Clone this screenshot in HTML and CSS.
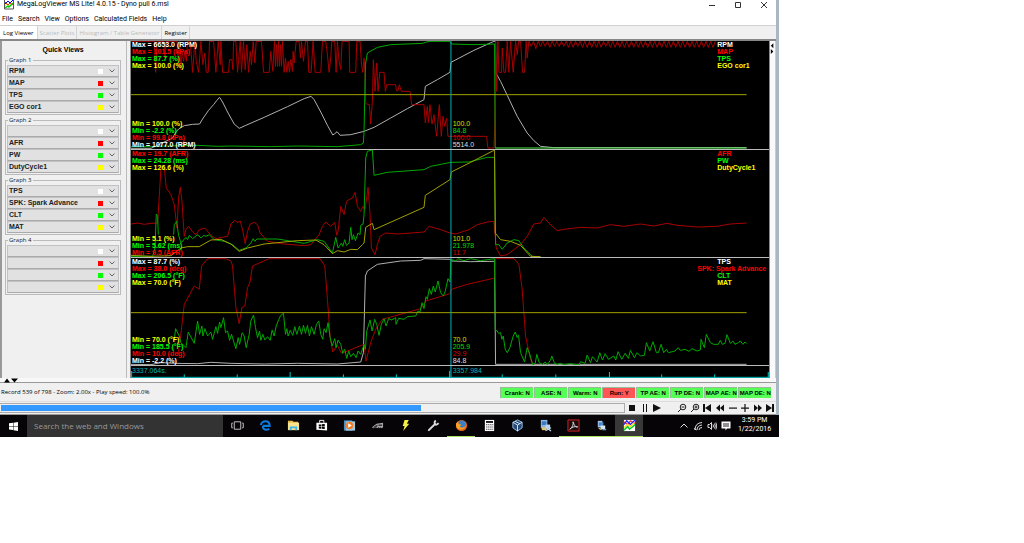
FILE: index.html
```html
<!DOCTYPE html>
<html lang="en">
<head>
<meta charset="utf-8">
<title>MegaLogViewer MS Lite! 4.0.15 - Dyno pull 6.msl</title>
<link rel="stylesheet" href="styles.css">
</head>
<body>
<div class="desktop">
<main class="window">
  <header class="titlebar">
    <svg class="logo" viewBox="0 0 10 10"><path fill="#fff" stroke="#555" d="M.5-1h9v10h-9z"/><path fill="none" stroke="#00f" d="M1 4l3-3 2 2 3-3"/><path fill="none" stroke="#e22" d="M1 2l3 3 2-2 3 2"/><path fill="none" stroke="#0c0" stroke-width="1.5" d="M1 8l3-2 1 1 4-4"/><path stroke="#fd0" d="M1 6l2-2"/></svg>
    <h1>MegaLogViewer MS Lite! 4.0.15 - Dyno pull 6.msl</h1>
    <div class="winbtns">
      <button aria-label="Minimize"><svg viewBox="0 0 8 8"><path d="M1 4.500h6"/></svg></button>
      <button aria-label="Maximize"><svg viewBox="0 0 8 8"><path d="M1.500 1.500h5v5h-5z"/></svg></button>
      <button aria-label="Close"><svg viewBox="0 0 8 8"><path d="M1 1l6 6M7 1L1 7"/></svg></button>
    </div>
  </header>
  <nav class="menubar">
    <button>File</button><button>Search</button><button>View</button><button>Options</button><button>Calculated Fields</button><button>Help</button>
  </nav>
  <div class="tabs">
    <button class="tab active">Log Viewer</button><button class="tab" disabled>Scatter Plots</button><button class="tab" disabled>Histogram / Table Generator</button><button class="tab">Register</button>
  </div>
  <div class="content">
    <aside class="views">
      <h2>Quick Views</h2>
      <fieldset><legend>Graph 1</legend>
        <div class="pick"><select aria-label="Graph 1 white"><option>RPM</option></select><i class="sw white"></i><svg class="chev" viewBox="0 0 6 4"><path d="M.5.5L3 3 5.500.5"/></svg></div>
        <div class="pick"><select aria-label="Graph 1 red"><option>MAP</option></select><i class="sw red"></i><svg class="chev" viewBox="0 0 6 4"><path d="M.5.5L3 3 5.500.5"/></svg></div>
        <div class="pick"><select aria-label="Graph 1 green"><option>TPS</option></select><i class="sw green"></i><svg class="chev" viewBox="0 0 6 4"><path d="M.5.5L3 3 5.500.5"/></svg></div>
        <div class="pick"><select aria-label="Graph 1 yellow"><option>EGO cor1</option></select><i class="sw yellow"></i><svg class="chev" viewBox="0 0 6 4"><path d="M.5.5L3 3 5.500.5"/></svg></div>
      </fieldset>
      <fieldset><legend>Graph 2</legend>
        <div class="pick"><select aria-label="Graph 2 white"><option></option></select><i class="sw white"></i><svg class="chev" viewBox="0 0 6 4"><path d="M.5.5L3 3 5.500.5"/></svg></div>
        <div class="pick"><select aria-label="Graph 2 red"><option>AFR</option></select><i class="sw red"></i><svg class="chev" viewBox="0 0 6 4"><path d="M.5.5L3 3 5.500.5"/></svg></div>
        <div class="pick"><select aria-label="Graph 2 green"><option>PW</option></select><i class="sw green"></i><svg class="chev" viewBox="0 0 6 4"><path d="M.5.5L3 3 5.500.5"/></svg></div>
        <div class="pick"><select aria-label="Graph 2 yellow"><option>DutyCycle1</option></select><i class="sw yellow"></i><svg class="chev" viewBox="0 0 6 4"><path d="M.5.5L3 3 5.500.5"/></svg></div>
      </fieldset>
      <fieldset><legend>Graph 3</legend>
        <div class="pick"><select aria-label="Graph 3 white"><option>TPS</option></select><i class="sw white"></i><svg class="chev" viewBox="0 0 6 4"><path d="M.5.5L3 3 5.500.5"/></svg></div>
        <div class="pick"><select aria-label="Graph 3 red"><option>SPK: Spark Advance</option></select><i class="sw red"></i><svg class="chev" viewBox="0 0 6 4"><path d="M.5.5L3 3 5.500.5"/></svg></div>
        <div class="pick"><select aria-label="Graph 3 green"><option>CLT</option></select><i class="sw green"></i><svg class="chev" viewBox="0 0 6 4"><path d="M.5.5L3 3 5.500.5"/></svg></div>
        <div class="pick"><select aria-label="Graph 3 yellow"><option>MAT</option></select><i class="sw yellow"></i><svg class="chev" viewBox="0 0 6 4"><path d="M.5.5L3 3 5.500.5"/></svg></div>
      </fieldset>
      <fieldset><legend>Graph 4</legend>
        <div class="pick"><select aria-label="Graph 4 white"><option></option></select><i class="sw white"></i><svg class="chev" viewBox="0 0 6 4"><path d="M.5.5L3 3 5.500.5"/></svg></div>
        <div class="pick"><select aria-label="Graph 4 red"><option></option></select><i class="sw red"></i><svg class="chev" viewBox="0 0 6 4"><path d="M.5.5L3 3 5.500.5"/></svg></div>
        <div class="pick"><select aria-label="Graph 4 green"><option></option></select><i class="sw green"></i><svg class="chev" viewBox="0 0 6 4"><path d="M.5.5L3 3 5.500.5"/></svg></div>
        <div class="pick"><select aria-label="Graph 4 yellow"><option></option></select><i class="sw yellow"></i><svg class="chev" viewBox="0 0 6 4"><path d="M.5.5L3 3 5.500.5"/></svg></div>
      </fieldset>
    </aside>
    <section class="plots">
      <div class="graph first">
        <svg viewBox="0 9 1917 324" preserveAspectRatio="none">
          <path class="w" d="M0 331H60L125 300 135 282 143 273 160 263 185 259 206 258 215 243 233 217 248 200 258 187 266 178 275 192 290 222 310 258 325 271 345 262 400 238 470 206 520 182 541 175 550 185 570 222 590 262 606 291 612 287 619 281 628 292 660 290 700 280 730 268 780 240 830 212 880 185 884 145 920 125 958 103 961 73 1030 37 1090 10 1095 10 1096 105 1110 130 1130 172 1160 235 1190 285 1210 308 1230 325 1270 329H1849"/>
          <path class="r" d="M0 10H70L74 103 78 10H98L102 60 106 10H138L142 80 146 10 150 95 154 40 158 70 162 40 166 70 170 10 178 10 185 103 192 10 196 70 203 103 210 10 216 80 222 45 226 103H232L236 10H248L255 103 262 10 268 80 270 10 275 103H293L296 65H303L306 95 308 10H315L320 103 328 10 332 103 338 10 343 95 348 20 353 103 358 40 362 80 367 10 372 75 376 10H392L398 103H415L420 40 426 100 431 10 434 85 437 20 440 85 443 10 446 85 449 20 452 85 455 10 460 103 464 60 468 103 472 70 476 103 480 65 485 100 487 40 490 75 496 10H505L509 60 512 10 518 70 524 10H530L534 103H541L547 10 553 103H570L575 10H585L590 50 595 103 600 60 603 10H612L616 103 620 10 625 70 630 95 634 10H655L657 103H675L678 10H688L692 75 696 103 700 60 703 103 705 197 716 200 720 258 725 190 728 65 733 160 738 75 742 160 747 103H760L764 160 768 140H795L797 158H802L806 140 812 160H838L843 200H880L884 255 890 205 893 255 898 200 904 258 910 230 918 295 926 200 932 295 937 235 942 265 948 240 952 295H1068L1072 330H1090L1093 255 1095 10 1098 160 1102 10 1105 103H1113L1115 30 1120 103H1125L1130 10 1135 103 1140 10 1148 103 1155 10 1160 50 1164 10H1170L1176 103H1182L1187 10 1190 60 1195 10l7 15 7-15 7 22 7-22 7 15 7-15 7 15 7-15 7 18 7-18 7 15 7-15 7 15 7-15 7 15 7-15 7 18 7-18 7 18 7-18 7 15 7-15 7 18 7-18 7 18 7-18 7 18 7-18 7 18 7-18 7 18 7-18 7 15 7-15 7 18 7-18 7 18 7-18 7 18 7-18 7 18 7-18 7 18 7-18 7 18 7-18 7 18 7-18 7 18 7-18 7 18 7-18 7 18 7-18 7 18 7-18 7 18 7-18 7 18 7-18 7 18 7-18 7 18 7-18 7 18 7-18 7 18 7-18 7 18 7-18 7 18 7-18 7 18 7-18 7 18 7-18 7 18 7-18 7 18 7-18"/>
          <path class="g" d="M0 326H70L100 324 200 322 260 325 300 324 420 326 500 324 620 326 690 320 698 315 700 280 704 80 710 45 740 28 780 20 875 16 895 10H958L963 18 1030 20 1092 18 1094 330"/>
          <path class="g bright" d="M1094 330H1849"/>
          <path class="y" d="M0 170H1849"/>
          <path class="cursor" d="M961 0V340"/>
        </svg>
        <ul class="max"><li class="cw">Max = 6653.0 (RPM)</li><li class="cr">Max = 101.5 (kPa)</li><li class="cg">Max = 87.7 (%)</li><li class="cy">Max = 100.0 (%)</li></ul>
        <ul class="min"><li class="cy">Min = 100.0 (%)</li><li class="cg">Min = -2.2 (%)</li><li class="cr">Min = 99.8 (kPa)</li><li class="cw">Min = 1077.0 (RPM)</li></ul>
        <ul class="now"><li class="cy">100.0</li><li class="cg">84.8</li><li class="cr">100.0</li><li class="cw">5514.0</li></ul>
        <ul class="names"><li class="cw">RPM</li><li class="cr">MAP</li><li class="cg">TPS</li><li class="cy">EGO cor1</li></ul>
      </div>
      <div class="graph">
        <svg viewBox="0 6 1917 321" preserveAspectRatio="none">
          <path class="r" d="M0 228L20 225 40 229 60 226 80 225 90 60H100L106 120 120 140 130 170 138 240 143 150 148 118 153 160 160 265 165 245 173 235 185 252 195 260 205 245 222 240 240 262 255 272 275 268 290 265 300 228 312 217 320 224 328 219 335 245 343 287 350 250 358 228 370 223 380 230 388 255 410 280 450 287 520 293 540 290 565 260 575 235 585 222 600 235 612 223 618 262 622 250 630 175 640 200 647 160 655 155 665 150 673 133 680 175 690 190 697 175 703 185 712 118 718 200 722 300 733 320 740 290 748 265 765 255 800 258 880 252 895 235 930 245 958 255 975 258 1015 245 1040 230 1070 222 1090 220 1097 300 1110 324 1130 320 1150 305 1170 290 1190 265 1210 228 1230 225 1240 208 1255 225 1280 248 1300 244 1350 238 1400 240 1440 230 1480 235 1530 228 1570 234 1610 226 1640 232 1700 237 1760 235 1800 228 1849 225"/>
          <path class="g" d="M0 325H65L72 300 76 198 80 205 82 260M128 260L130 230 137 220 143 262 150 285 165 268 170 275 175 262 185 272 200 260 210 270 218 262 225 265 235 260 250 275 280 280 305 290 325 307 345 300 360 285 367 272 372 280 378 273H440L520 286 560 275 580 280 605 315 615 268 622 300 632 285 636 295 642 275 647 292 655 285 660 238 664 275 668 260 674 278 682 255 688 260 690 232 697 228 700 200 705 30 710 10 725 6 730 82 770 73 880 65 900 55 961 43 1015 42 1070 28H1092L1095 290H1105L1115 304 1130 285 1150 275 1165 278 1180 300 1205 325 1230 327"/>
          <path class="y" d="M0 322L60 325 120 323 150 300 170 296 205 296 240 276 270 274 300 288 325 310 350 300 400 288 500 278 555 276 580 290 605 317 620 308 640 312 660 304 680 305 695 290 700 285 705 238 725 226 730 245 880 178 884 142 958 95 962 72 1030 38 1090 7 1092 7 1094 255 1110 275 1140 280 1170 292 1200 325 1230 326"/>
          <path class="cursor" d="M961 0V340"/>
        </svg>
        <ul class="max"><li class="cr">Max = 19.7 (AFR)</li><li class="cg">Max = 24.28 (ms)</li><li class="cy">Max = 126.6 (%)</li></ul>
        <ul class="min"><li class="cy">Min = 5.1 (%)</li><li class="cg">Min = 5.62 (ms)</li><li class="cr">Min = 9.5 (AFR)</li></ul>
        <ul class="now"><li class="cy">101.0</li><li class="cg">21.978</li><li class="cr">11.7</li></ul>
        <ul class="names"><li class="cr">AFR</li><li class="cg">PW</li><li class="cy">DutyCycle1</li></ul>
      </div>
      <div class="graph">
        <svg viewBox="0 6 1917 321" preserveAspectRatio="none">
          <path class="w" d="M0 325L60 326 90 320 135 322 200 323 240 319 300 322 400 324 500 322 620 324 690 318 698 290 704 60 710 45 740 25 810 15 870 13 880 8 960 10 962 15 1020 17 1092 16 1095 325H1849"/>
          <path class="r" d="M140 300L148 250 160 145 190 90 205 100 212 30 230 8H285L300 15 305 30 315 155 325 203 333 155 342 150 350 95 357 80 365 30 415 8H568L582 30 590 130 598 240 606 288 620 268 632 292 700 265 706 315 720 260 735 220 755 190 780 183 870 158 885 135 958 113 962 100 1010 85 1092 66 1094 8H1150L1165 25 1175 100 1185 240 1200 310 1210 326"/>
          <path class="g" d="M130 250L134 218 145 240 150 260 165 275 172 228 190 262 200 195 206 235 213 210 216 240 222 218 230 240 240 228 245 250 255 212 260 232 266 198 270 215 278 185 284 230 290 225 296 253 302 235 315 278 322 245 326 265 334 230 340 240 346 275 355 235 360 195 368 177 374 215 380 245 386 225 390 253 396 235 402 252 410 242 418 253 424 222 430 240 436 210 444 190 450 178 458 172 464 235 468 218 472 240 478 223 486 238 492 212 498 235 506 210 512 235 518 208 524 232 530 208 536 240 542 212 550 235 557 205 564 195 570 235 576 250 580 218 586 230 592 200 598 245 604 270 612 248 616 275 622 252 630 265 636 292 642 280 648 307 654 285 660 302 668 292 676 305 682 285 690 295 700 265 704 280 708 225 718 192 724 225 732 190 738 205 745 238 752 205 760 188 766 210 774 187 782 192 795 185 796 205 804 187 820 190 830 182 855 180 862 165 868 168 874 140 880 158 886 122 890 130 896 98 902 115 908 90 914 108 922 75 930 110 938 120 944 105 952 68 958 78 961 10 975 15 982 8 1000 14 1020 8 1050 14 1092 8 1094 222 1100 225 1104 232 1110 230 1114 250 1118 240 1124 280 1130 290 1138 275 1148 240 1154 228 1160 245 1164 238 1170 290 1182 318 1190 275 1198 295 1206 325 1214 322 1219 295 1226 320 1236 325 1244 318 1250 326 1260 312 1264 300 1272 322 1280 325 1290 322 1300 326 1320 323 1346 327 1350 317 1364 322 1370 297 1380 320 1386 302 1400 318 1408 290 1416 312 1424 293 1434 310 1450 300 1456 312 1463 287 1474 310 1484 292 1494 307 1500 283 1512 305 1520 290 1530 300 1542 298 1548 260 1558 285 1568 257 1578 290 1584 290 1592 265 1600 290 1608 280 1614 290 1634 285 1643 275 1650 283 1664 280 1676 286 1685 278 1700 285 1710 282 1712 250 1722 275 1728 235 1740 260 1750 265 1764 265 1770 253 1776 265 1784 262 1790 236 1800 262 1808 255 1814 265 1824 260 1830 255 1838 265 1844 258 1849 262"/>
          <path class="y" d="M0 170H1849"/>
          <path class="cursor" d="M961 0V340"/>
        </svg>
        <ul class="max"><li class="cw">Max = 87.7 (%)</li><li class="cr">Max = 38.0 (deg)</li><li class="cg">Max = 206.5 (°F)</li><li class="cy">Max = 70.0 (°F)</li></ul>
        <ul class="min"><li class="cy">Min = 70.0 (°F)</li><li class="cg">Min = 185.5 (°F)</li><li class="cr">Min = 10.0 (deg)</li><li class="cw">Min = -2.2 (%)</li></ul>
        <ul class="now"><li class="cy">70.0</li><li class="cg">205.9</li><li class="cr">29.9</li><li class="cw">84.8</li></ul>
        <ul class="names"><li class="cw">TPS</li><li class="cr">SPK: Spark Advance</li><li class="cg">CLT</li><li class="cy">MAT</li></ul>
      </div>
      <div class="axis">
        <svg viewBox="0 0 1917 36" preserveAspectRatio="none"><path class="tick" d="M0 34H1917M2 15V34M160 25V34M319 25V34M478 18V34M638 25V34M797 25V34M957 14V34M961 0V34M1115 25V34M1276 25V34M1437 18V34M1594 25V34M1753 25V34M1914 18V34"/></svg>
        <span>3337.064s.</span><span>3357.984</span>
      </div>
    </section>
    <div class="strip"><svg viewBox="0 0 6 14"><path d="M4 0v6L1 3zM1 7v6l3-3z"/></svg></div>
  </div>
  <div class="divider"><svg viewBox="0 0 16 5"><path d="M1 4.500h6L4 .5zM8 .5h7L11.500 4.500z"/></svg></div>
  <div class="status">
    <p>Record 539 of 798 - Zoom: 2.00x - Play speed: 100.0%</p>
    <ul class="flags"><li>Crank: N</li><li>ASE: N</li><li>Warm: N</li><li class="on">Run: Y</li><li>TP AE: N</li><li>TP DE: N</li><li>MAP AE: N</li><li>MAP DE: N</li></ul>
  </div>
  <div class="player">
    <div class="track" role="progressbar" aria-label="Position" aria-valuenow="539" aria-valuemax="798"><div class="fill" style="width:67.5%"></div></div>
    <div class="keys transport">
      <button aria-label="Stop"><svg viewBox="0 0 10 10"><path d="M2 2h6v6H2z"/></svg></button>
      <button aria-label="Pause"><svg viewBox="0 0 10 10"><path d="M3 1h1v8H3zM6 1h1v8H6z"/></svg></button>
      <button aria-label="Play"><svg viewBox="0 0 10 10"><path d="M1 1l8 4-8 4z"/></svg></button>
    </div>
    <div class="keys seek">
      <button aria-label="Zoom out"><svg viewBox="0 0 10 10"><path class="line" d="M4 6L1 9M4.500 4h3"/><circle class="line" cx="6" cy="4" r="2.800"/></svg></button>
      <button aria-label="Zoom in"><svg viewBox="0 0 10 10"><path class="line" d="M4 6L1 9M4.500 4h3M6 2.500v3"/><circle class="line" cx="6" cy="4" r="2.800"/></svg></button>
      <button aria-label="First"><svg viewBox="0 0 10 10"><path d="M1 1h2v8H1zM9 1v8L3 5z"/></svg></button>
      <button aria-label="Rewind"><svg viewBox="0 0 10 10"><path d="M5 1.500v7L1 5zM9 1.500v7L5 5z"/></svg></button>
      <button aria-label="Slower"><svg viewBox="0 0 10 10"><path d="M1 4.500h8v1.200H1z"/></svg></button>
      <button aria-label="Faster"><svg viewBox="0 0 10 10"><path d="M1 4.500h8v1.200H1zM4.400 1h1.200v8H4.400z"/></svg></button>
      <button aria-label="Forward"><svg viewBox="0 0 10 10"><path d="M1 1.500v7L5 5zM5 1.500v7L9 5z"/></svg></button>
      <button aria-label="Last"><svg viewBox="0 0 10 10"><path d="M9 1H7v8h2zM1 1v8l6-4z"/></svg></button>
    </div>
  </div>
</main>
<footer class="taskbar">
  <button class="start" aria-label="Start"><svg viewBox="0 0 10 10"><path fill="#fff" d="M0 1.500L4.500.9v3.800H0zM5 .8L10 0v4.700H5zM0 5.200h4.500V9L0 8.400zM5 5.200h5V10l-5-.8z"/></svg></button>
  <input class="search" type="text" placeholder="Search the web and Windows" aria-label="Search the web and Windows">
  <div class="apps">
    <button aria-label="Task view"><svg viewBox="0 0 14 14"><path fill="none" stroke="#ccc" d="M3.500 3h7v8h-7zM2 4.500H.8v5H2M12 4.500h1.200v5H12"/></svg></button>
    <button aria-label="Edge"><svg viewBox="0 0 14 14"><path fill="none" stroke="#0a7be0" stroke-width="2.200" d="M4 7.400h7.500C11.500 4 9.500 2.500 7 2.500 4.500 2.500 2.300 4.300 2 6.500M4.200 7.500C4 10 5.500 11.500 8 11.500q1.700 0 3-.8"/></svg></button>
    <button aria-label="File Explorer"><svg viewBox="0 0 14 14"><path fill="#e8bd4c" d="M1 2h5l1 1h5v2H1z"/><path fill="#fbe28c" d="M1 4h12v8H1z"/><path fill="#3eb4e8" d="M3 12V8h8v4H9v-2H5v2z"/></svg></button>
    <button aria-label="Store"><svg viewBox="0 0 14 14"><path fill="none" stroke="#fff" d="M5 4V1.500h4.500V4"/><path fill="#fff" d="M1.500 4h11.500v8.500L1.500 11.500z"/><path fill="#000" d="M4 6l2.600-.2v2H4zM7.200 5.700L10.500 5.500v2.300H7.200zM4 8.400h2.600v2L4 10.200zM7.200 8.400h3.300v2.400l-3.300-.3z"/></svg></button>
    <button aria-label="Media player"><svg viewBox="0 0 14 14"><path fill="#4a8fc0" d="M1 1.500h9v11H1z"/><path fill="#9bc8e4" d="M3 2.500h10v10H3z"/><circle cx="7" cy="7" r="4" fill="#f47b20"/><path fill="#fff" d="M5.500 4.500v5l4-2.500z"/></svg></button>
    <button aria-label="Tuner"><svg viewBox="0 0 14 14"><path fill="#aaa" d="M1 9l5-4 7-1v5l-1.500 1-1-1-1 1-1-1-2 1-1-1-3 1z"/><path fill="#333" d="M2 9l5-3v2l-3 1.500zM8 6h4v1.500H8z"/></svg></button>
    <button aria-label="Spark"><svg viewBox="0 0 14 14"><path fill="#f4f04a" d="M6 1h4.500L8.500 5H11l-6.500 8L6 7.500H4z"/></svg></button>
    <button aria-label="Wrench"><svg viewBox="0 0 14 14"><path fill="none" stroke="#ddd" stroke-width="2.200" stroke-linecap="round" d="M2 12l6.500-6.500"/><path fill="none" stroke="#ddd" stroke-width="2" d="M9.500 1.500Q7.500 3 8.500 5.200t4-.7"/></svg></button>
    <button class="run" aria-label="Firefox"><svg viewBox="0 0 14 14"><circle cx="7" cy="7" r="6" fill="#e8651b"/><circle cx="7.500" cy="5.500" r="3.800" fill="#3c7fc4"/><path fill="#f9a326" d="M1 5l2-2 1 2.500 3 .8-2 1.700c1.500 2 4 2 6.500-.5C10 12 4 12.500 1.500 9z"/></svg></button>
    <button aria-label="Calculator"><svg viewBox="0 0 14 14"><path fill="#fff" d="M2 1h10v12H2z"/><path fill="#111" d="M3.200 2.200h7.600v2H3.200z"/><path stroke="#111" stroke-width="1.200" stroke-dasharray="1.200 1" d="M3.500 6.200h7.500M3.500 8.600h7.500M3.500 11h7.500"/></svg></button>
    <button aria-label="VirtualBox"><svg viewBox="0 0 14 14"><path fill="#274a78" stroke="#9ec3e8" d="M7 1l5 2.500v6L7 13 2 9.500v-6z"/><path fill="none" stroke="#dcecfa" d="M2 3.500L7 6.500l5-3M7 6.500V13M4.500 2.500L9.500 5"/></svg></button>
    <button aria-label="Remote tools"><svg viewBox="0 0 14 14"><path fill="#8db9e8" d="M2 1h7v9H2z"/><path fill="#3b78bd" d="M3 2.500h5v4H3z"/><path fill="#e0c36a" d="M3 9h5v3H3z"/><path fill="#b9d5ee" d="M7 6h5v4H7z"/><path stroke="#c9dcf0" stroke-width="1.300" d="M7 12.500l6-3M8 9.500l5 3.500"/></svg></button>
    <button class="run" aria-label="Acrobat"><svg viewBox="0 0 14 14"><path fill="#1d0c0e" stroke="#d22" d="M1 1h12v12H1z"/><path fill="none" stroke="#ddd" d="M3 11c3-2 4-5 3.500-8C8 7 9 9 11.500 8.500 8 7.500 5 9 3 11"/></svg></button>
    <button class="run" aria-label="Log tool"><svg viewBox="0 0 14 14"><path fill="#a9c8ea" d="M3 2h5v7H3z"/><path fill="#4d8bd0" d="M4 3.500h5v4H4z"/><path fill="#d6e5f3" d="M6 7h5v4H6z"/><path stroke="#e3c66b" stroke-width="1.200" d="M4 10l3 1.500"/><path stroke="#6aa1dc" stroke-width="1.300" d="M8 11.500h4"/></svg></button>
    <button class="run current" aria-label="MegaLogViewer"><svg viewBox="0 0 14 14"><path fill="#fff" d="M1 1h12v12H1z"/><path fill="none" stroke="#e33" stroke-width="1.400" d="M1 3l4 3 3-4 5 3"/><path fill="none" stroke="#22f" stroke-width="1.400" d="M1 6l3-4 4 4 5-5"/><path fill="none" stroke="#0c2" stroke-width="1.600" d="M1 12l4-4 2 3 6-5"/><path fill="none" stroke="#fd2" stroke-width="1.400" d="M1 9l4-3 3 2 4-4"/></svg></button>
  </div>
  <div class="tray">
    <svg viewBox="0 0 10 10"><path d="M1.500 6.500L5 3l3.500 3.500"/></svg>
    <svg viewBox="0 0 10 10"><path d="M2 9Q2 2 9 1.500M4 9q0-4.500 5-5M6 9q0-2.500 3-2.500M1 7.500L3.500 9"/></svg>
    <svg viewBox="0 0 10 10"><path d="M1 3.500h1.500L4.500 1.500v7L2.500 6.500H1zM6 3.500q1 1.500 0 3M7.500 2.500q1.500 2.500 0 5M8.800 1.500q2 3.500 0 7"/></svg>
    <svg class="note" viewBox="0 0 10 10"><path d="M.5.5h9v7H6L4.500 9.500v-2h-4z"/><path class="cut" d="M2 3h6M2 5h6"/></svg>
  </div>
  <time><span>3:59 PM</span><span>1/22/2016</span></time>
</footer>
</div>
</body>
</html>
```
FILE: styles.css
```css
* { box-sizing: border-box; margin: 0; padding: 0; }
body { background: #fff; font: 6px/8px "Open Sans", "Noto Sans", sans-serif; color: #000; }
button, input, select { font: inherit; color: inherit; border: 0; background: none; border-radius: 0; }
ul { list-style: none; }
svg { display: block; }
.desktop { width: 76.1%; }
.window { background: #f0f0f0; border-right: 3px solid #a9b7c4; }

.titlebar { display: flex; align-items: center; height: 11px; padding: 0 8px 2px 4px; gap: 3px; background: #fff; }
.logo { width: 10px; height: 10px; }
.titlebar h1 { flex: 1; font: 400 7px/9px Roboto, "Open Sans", sans-serif; }
.winbtns { display: flex; gap: 18px; }
.winbtns svg { width: 8px; height: 8px; fill: none; stroke: #333; }

.menubar { display: flex; gap: 5px; height: 14px; padding: 1px 2px 0; background: #fff; font: 7px/8px Roboto, "Open Sans", sans-serif; }
.tabs { display: flex; height: 14px; border-top: 1px solid #d0d0d0; }
.tab { padding: 0 2px; border-right: 1px solid #d5d5d5; }
.tab.active { background: #fff; padding: 0 3px; }
.tab:disabled { color: #bbb; }

.content { display: grid; grid-template-columns: 130px 1fr 7px; border-top: 2px solid #888; }
.views { border-left: 2px solid #999; padding: 4px 9px 0 3px; background: #f0f0f0; box-shadow: inset -3px 0 0 #f0f0f0, inset -4px 0 0 #bbb; }
.views h2 { font: bold 7px/10px "Liberation Sans", Arial, sans-serif; text-align: center; margin-bottom: 1px; }
fieldset { border: 1px solid #bbb; padding: 1px; margin-bottom: 1px; min-width: 0; }
legend { margin-left: 1px; padding: 0 1px; line-height: 8px; color: #222; }
.pick { display: grid; grid-template-columns: 1fr 5px 6px; column-gap: 6px; align-items: center; height: 12px; padding-right: 3px; border: 1px solid #c2c2c6; border-bottom-color: #aaa; background: #e1e1e1; }
.pick select { grid-area: 1 / 1 / 2 / 4; appearance: none; height: 10px; padding-left: 1px; font: bold 7px/10px "Liberation Sans", Arial, sans-serif; width: 100%; color: #222; }
.sw { grid-area: 1 / 2; height: 5px; pointer-events: none; }
.chev { grid-area: 1 / 3; width: 6px; height: 4px; fill: none; stroke: #666; pointer-events: none; }
.white { background: #fff; }
.red { background: #f00; }
.green { background: #0f0; }
.yellow { background: #ff0; }

.plots { background: #000; min-width: 0; border-left: 1px solid #888; font: bold 7px/7px "Liberation Sans", Arial, sans-serif; }
.graph { position: relative; border-bottom: 1px solid #bbb; }
.graph svg { width: 100%; height: 107px; }
.graph.first svg { height: 108px; }
.graph path { fill: none; stroke-width: 1px; vector-effect: non-scaling-stroke; }
.graph .w { stroke: #b0b0b0; }
.graph .r { stroke: #a80000; }
.graph .g { stroke: #00a800; }
.graph .bright { stroke: #4e4; }
.graph .y { stroke: #a0a000; }
.graph .cursor { stroke: #00b4b4; }
.graph ul { position: absolute; }
.max { top: 0; left: 1px; }
.min { bottom: 1px; left: 1px; }
.now { bottom: 1px; left: 50.4%; font-weight: 400; opacity: .85; }
.names { top: 0; right: 3px; display: grid; justify-items: end; }
.names li { min-width: 49px; }
.cw { color: #fff; }
.cr { color: #f00; }
.cg { color: #0f0; }
.cy { color: #ff0; }
.axis { display: grid; grid-template-columns: 50.4% 1fr; height: 12px; font-weight: 400; color: #00b4b4; }
.axis svg { grid-area: 1 / 1 / 2 / 3; width: 100%; height: 12px; }
.axis span { grid-row: 1; line-height: 10px; }
.axis span:first-of-type { grid-column: 1; padding-left: 1px; }
.axis span:last-of-type { grid-column: 2; }
.tick { fill: none; stroke: #00c8c8; stroke-width: 1px; vector-effect: non-scaling-stroke; }
.strip { border-left: 1px solid #888; border-right: 1px solid #ccc; background: #fafafa; }
.strip svg { width: 5px; height: 14px; margin-top: 1px; }

.divider { height: 5px; padding-left: 3px; border-bottom: 1px solid #999; background: #f8f8f8; }
.divider svg { width: 16px; height: 5px; }
.status { display: flex; justify-content: space-between; align-items: center; height: 18px; padding: 0 5px 0 1px; }
.flags { display: flex; gap: 1px; }
.flags li { width: 33px; height: 11px; border: 1px solid #9b9; border-width: 1px 0 0 1px; background: #5f5; text-align: center; white-space: nowrap; font: bold 6px/10px "Liberation Sans", Arial, sans-serif; }
.flags .on { background: #f55; }

.player { display: flex; align-items: center; height: 14px; padding-right: 1px; border-top: 1px solid #ddd; border-bottom: 1px solid #999; }
.track { flex: 1; height: 10px; padding: 1px; border: 1px solid #aaa; border-left: 0; background: #f0f0f0; }
.fill { height: 6px; background: #39f; }
.keys { display: flex; justify-content: space-between; }
.transport { width: 35px; margin: 0 15px 0 2px; }
.seek { width: 98px; }
.keys button { width: 10px; height: 10px; }
.keys svg { width: 10px; height: 10px; fill: #111; }
.keys .line { fill: none; stroke: #222; stroke-width: 1; }

.taskbar { display: flex; height: 22px; background: #060406; }
.start { width: 27px; display: grid; place-items: center; }
.start svg { width: 9px; height: 9px; }
.search { width: 196px; padding-left: 7px; background: #333; font-size: 8px; line-height: 12px; }
.search::placeholder { color: #999; opacity: 1; }
.apps { display: flex; flex: 1; }
.apps button { width: 28px; display: grid; place-items: center; border-bottom: 1px solid transparent; }
.apps svg { width: 13px; height: 13px; }
.apps .run { border-bottom-color: #a9e060; }
.apps .current { background: #383838; }
.tray { display: flex; align-items: center; gap: 4px; }
.tray svg { width: 10px; height: 10px; fill: none; stroke: #ddd; }
.tray .note { fill: #fff; stroke: none; }
.tray .cut { stroke: #222; }
time { display: grid; align-content: center; text-align: center; color: #fff; font: 7px/9px Roboto, "Open Sans", sans-serif; padding: 0 8px 2px 7px; }
```
